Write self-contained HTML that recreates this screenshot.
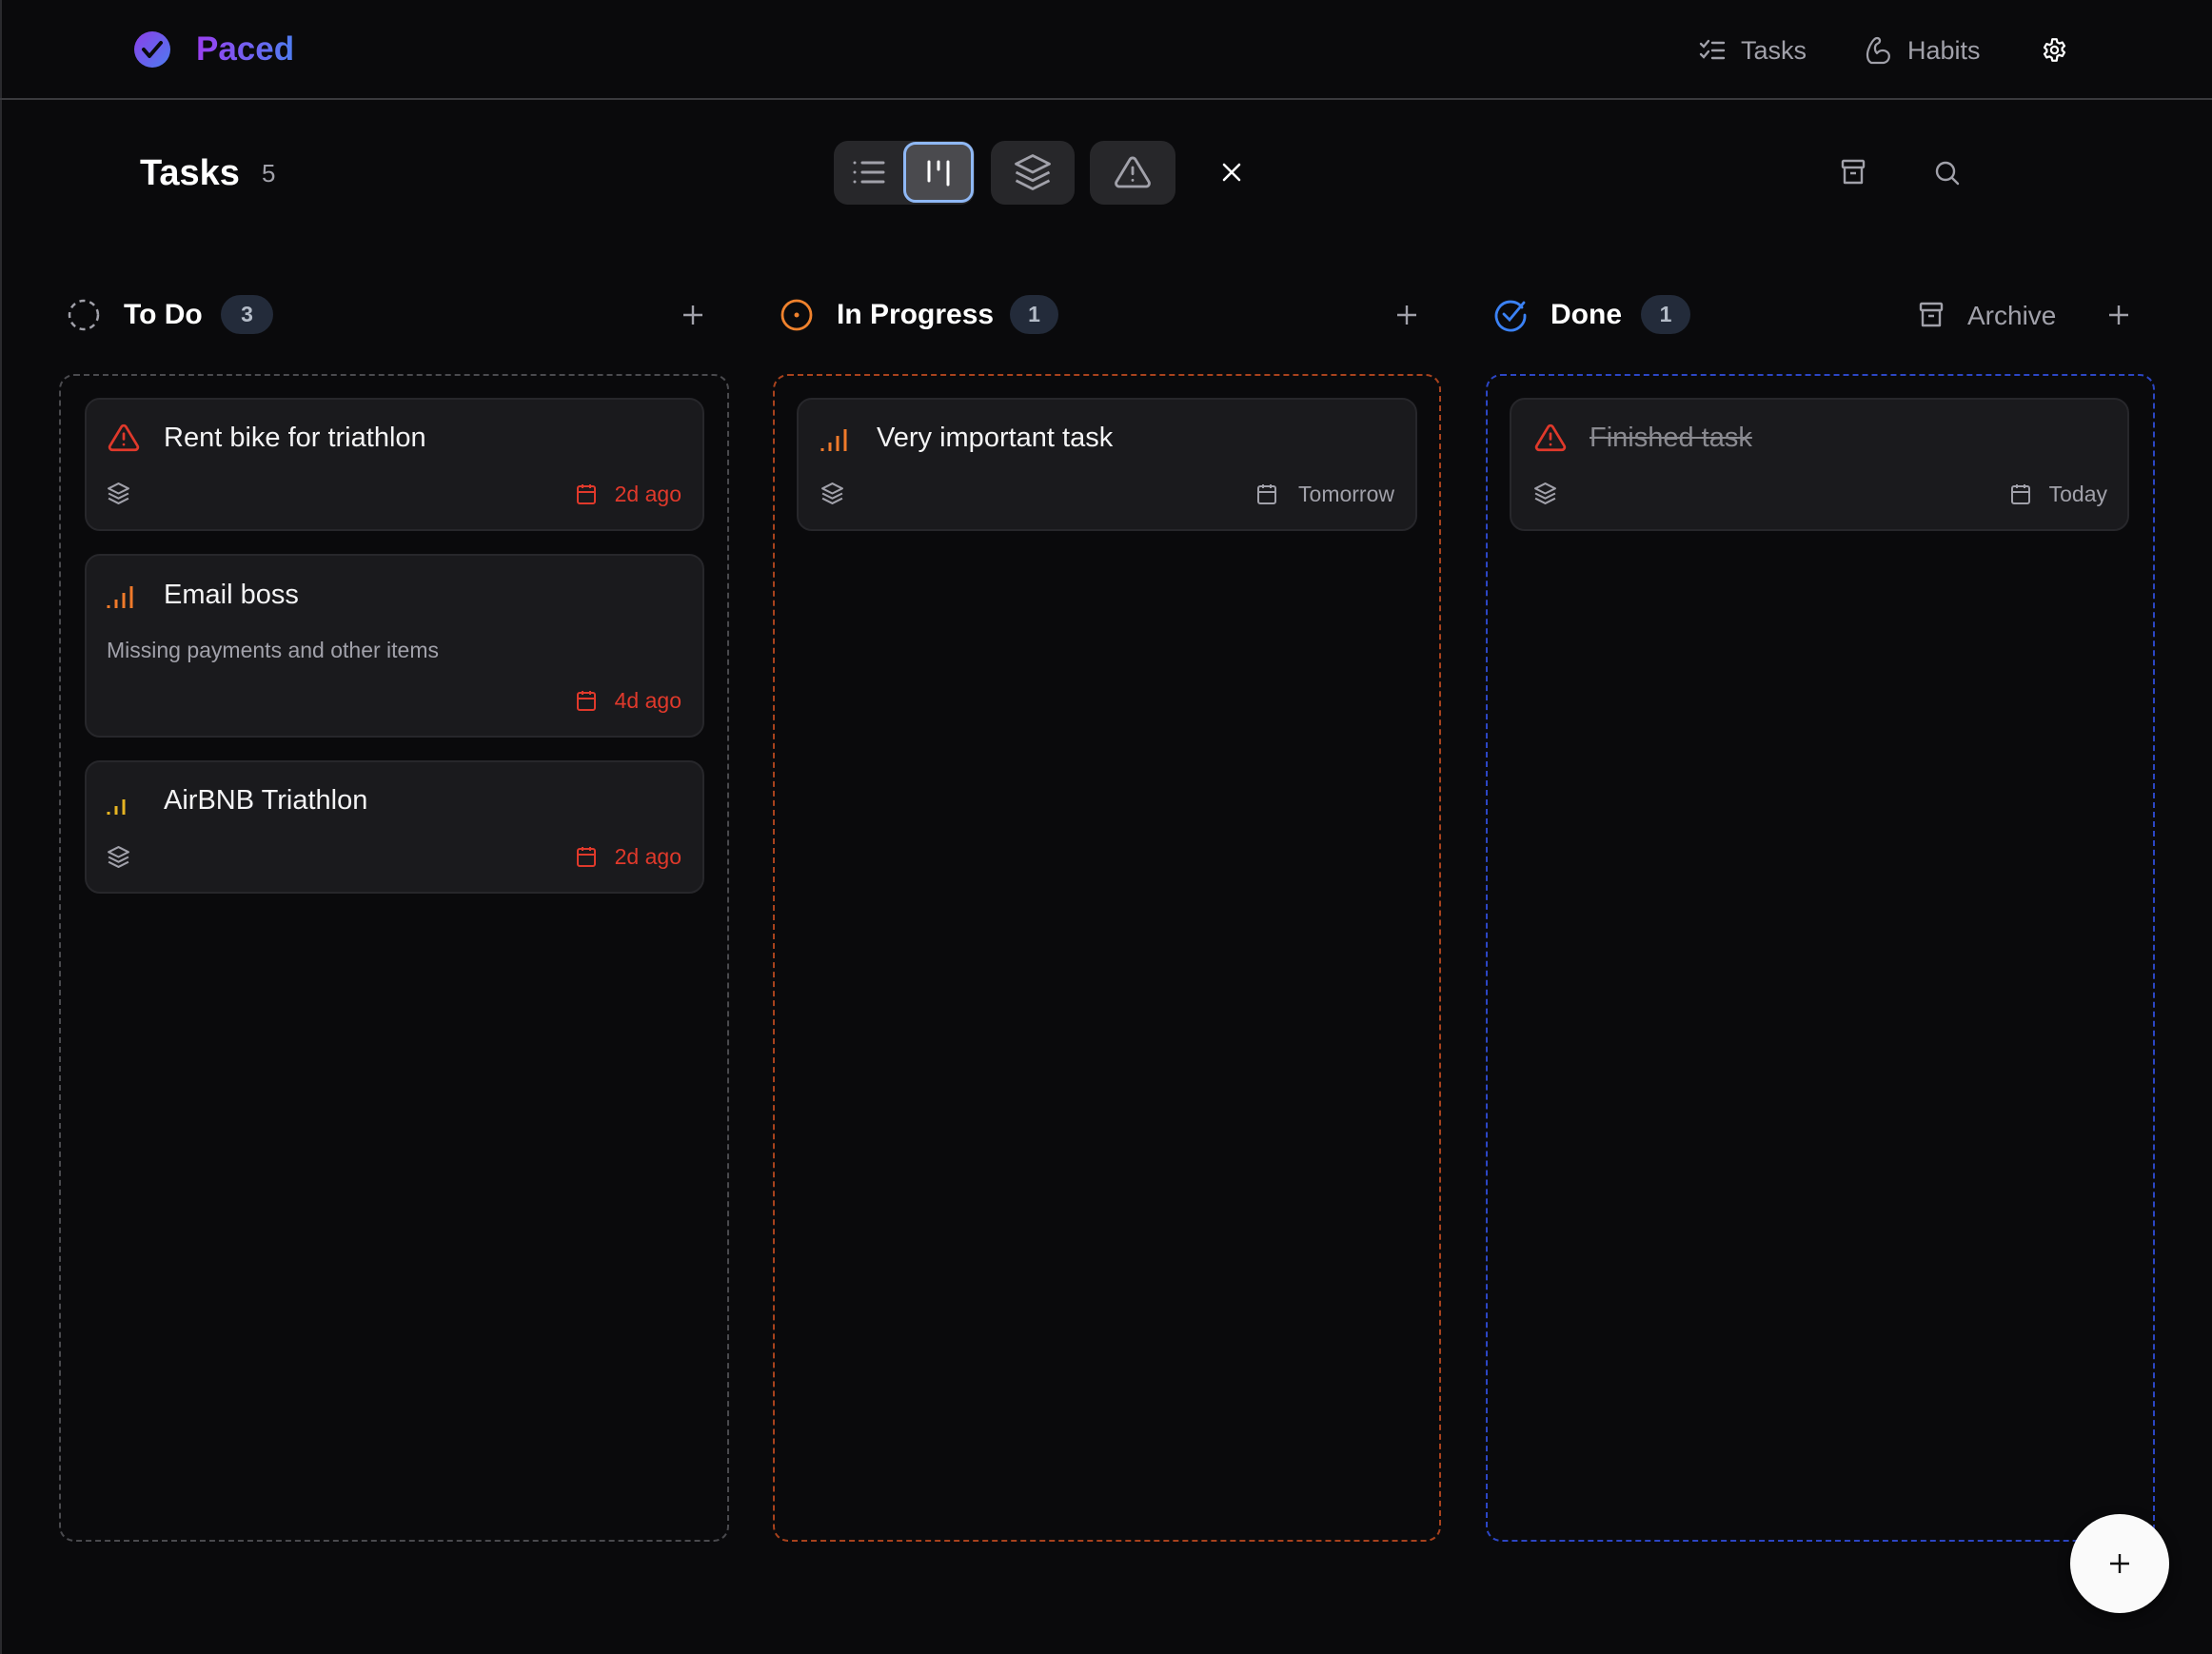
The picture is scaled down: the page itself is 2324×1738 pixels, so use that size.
<!DOCTYPE html>
<html><head><meta charset="utf-8"><style>
*{box-sizing:border-box;margin:0;padding:0}
body{width:2324px;height:1738px;background:#0a0a0c;font-family:"Liberation Sans",sans-serif;position:relative;overflow:hidden;color:#fff}
.a{position:absolute}
.t{position:absolute;white-space:nowrap;line-height:1}
svg{position:absolute;overflow:visible}
.col{position:absolute;top:393px;height:1227px;border:2px dashed;border-radius:16px}
.card{position:absolute;background:#1a1a1d;border:2px solid #27272b;border-radius:16px}
.badge{position:absolute;top:310px;height:41px;background:#232b3a;border-radius:21px;color:#b4bcc8;font-size:23px;font-weight:bold;text-align:center;line-height:41px}
.ct{font-size:29px;color:#f4f4f5}
.dt{font-size:23px}
</style></head><body>
<div class="a" style="left:0;top:0;width:2px;height:1738px;background:#2a2a2e"></div>
<div class="a" style="left:0;top:103px;width:2324px;height:2px;background:#3a3a3e"></div>

<!-- logo -->
<svg style="left:141px;top:33px" width="38" height="38" viewBox="0 0 38 38"><defs><linearGradient id="g" x1="0" y1="0" x2="1" y2="1"><stop offset="0" stop-color="#8b3fe8"/><stop offset="1" stop-color="#4c7cf0"/></linearGradient></defs><circle cx="19" cy="19" r="19" fill="url(#g)"/><path d="M10 19l6 7 12-14" stroke="#0a0a0c" stroke-width="4" fill="none" stroke-linecap="round" stroke-linejoin="round"/></svg>
<div class="t" style="left:206px;top:34px;font-size:35px;font-weight:bold;background:linear-gradient(90deg,#9a3ff0,#4f7ef2);-webkit-background-clip:text;background-clip:text;color:transparent">Paced</div>

<!-- nav -->
<svg style="left:1786px;top:42px" width="26" height="22" viewBox="0 0 26 22" fill="none" stroke="#a1a1aa" stroke-width="2.4" stroke-linecap="round"><path d="M1 4l3 3 5-6M1 15l3 3 5-6M13 3h12M13 11h12M13 19h12"/></svg>
<div class="t" style="left:1829px;top:40px;font-size:27px;color:#a1a1aa">Tasks</div>
<svg style="left:1960px;top:38px" width="28" height="30" viewBox="0 0 28 30" fill="none" stroke="#a1a1aa" stroke-width="2.2" stroke-linecap="round" stroke-linejoin="round"><path d="M6 28C2 26 1 20 3 14 5 8 9 2 12 2c3 0 4 3 2 5l-3 2c-2 3-1 7 1 9 3-4 9-4 12 0 2 4 0 9-5 10z"/></svg>
<div class="t" style="left:2004px;top:40px;font-size:27px;color:#a1a1aa">Habits</div>
<svg style="left:2145px;top:39px" width="27" height="27" viewBox="0 0 24 24" fill="none" stroke="#fff" stroke-width="2" stroke-linejoin="round"><path d="M10 2h4l.6 2.8 2 1.1 2.7-1 2 3.4-2.1 1.9v2.2l2.1 1.9-2 3.4-2.7-1-2 1.1L14 22h-4l-.6-2.8-2-1.1-2.7 1-2-3.4 2.1-1.9v-2.2L2.7 9.7l2-3.4 2.7 1 2-1.1z"/><circle cx="12" cy="12" r="3.2"/></svg>

<!-- page header -->
<div class="t" style="left:147px;top:163px;font-size:38px;font-weight:bold">Tasks</div>
<div class="t" style="left:275px;top:169px;font-size:26px;color:#a1a1aa">5</div>

<div class="a" style="left:876px;top:148px;width:148px;height:67px;background:#27272a;border-radius:15px"></div>
<svg style="left:896px;top:168px" width="34" height="26" viewBox="0 0 34 26" stroke="#a1a1aa" stroke-width="3" stroke-linecap="round"><path d="M2 3h0M2 13h0M2 23h0M10 3h22M10 13h22M10 23h22"/></svg>
<div class="a" style="left:949px;top:149px;width:74px;height:64px;background:#4a4a4e;border:3px solid #8fb8f5;border-radius:13px"></div>
<svg style="left:973px;top:168px" width="26" height="28" viewBox="0 0 26 28" stroke="#fff" stroke-width="3" stroke-linecap="round"><path d="M3 2v20M13 2v8M23 2v24"/></svg>
<div class="a" style="left:1041px;top:148px;width:88px;height:67px;background:#27272a;border-radius:15px"></div>
<svg style="left:1064px;top:160px" width="42" height="42" viewBox="0 0 24 24" fill="none" stroke="#a1a1aa" stroke-width="1.6" stroke-linejoin="round"><path d="M12 2L2 7l10 5 10-5zM2 12l10 5 10-5M2 17l10 5 10-5"/></svg>
<div class="a" style="left:1145px;top:148px;width:90px;height:67px;background:#27272a;border-radius:15px"></div>
<svg style="left:1169px;top:161px" width="42" height="40" viewBox="0 0 24 24" fill="none" stroke="#a1a1aa" stroke-width="1.7" stroke-linecap="round" stroke-linejoin="round"><path d="M10.3 3.9L1.8 18a2 2 0 001.7 3h17a2 2 0 001.7-3L13.7 3.9a2 2 0 00-3.4 0zM12 9v4M12 17h0"/></svg>
<svg style="left:1284px;top:171px" width="20" height="20" viewBox="0 0 20 20" stroke="#fff" stroke-width="2.6" stroke-linecap="round"><path d="M2 2l16 16M18 2L2 18"/></svg>
<svg style="left:1934px;top:167px" width="26" height="28" viewBox="0 0 26 28" fill="none" stroke="#a1a1aa" stroke-width="2.4" stroke-linejoin="round"><rect x="2" y="2" width="22" height="7" rx="1"/><path d="M4 9v16h18V9M10 15h6"/></svg>
<svg style="left:2032px;top:168px" width="28" height="28" viewBox="0 0 28 28" fill="none" stroke="#a1a1aa" stroke-width="2.4" stroke-linecap="round"><circle cx="12" cy="12" r="9"/><path d="M19 19l6 6"/></svg>

<!-- columns headers -->
<svg style="left:71px;top:314px" width="34" height="34" viewBox="0 0 34 34"><circle cx="17" cy="17" r="15" fill="none" stroke="#a1a1aa" stroke-width="2.5" stroke-dasharray="6 5"/></svg>
<div class="t" style="left:130px;top:316px;font-size:30px;font-weight:bold">To Do</div>
<div class="badge" style="left:232px;width:55px">3</div>
<svg style="left:717px;top:320px" width="22" height="22" viewBox="0 0 22 22" stroke="#a1a1aa" stroke-width="2.4"><path d="M11 1v20M1 11h20"/></svg>

<svg style="left:820px;top:314px" width="34" height="34" viewBox="0 0 34 34"><circle cx="17" cy="17" r="15" fill="none" stroke="#f0822d" stroke-width="2.8"/><circle cx="17" cy="17" r="2.5" fill="#f0822d"/></svg>
<div class="t" style="left:879px;top:316px;font-size:30px;font-weight:bold">In Progress</div>
<div class="badge" style="left:1061px;width:51px">1</div>
<svg style="left:1467px;top:320px" width="22" height="22" viewBox="0 0 22 22" stroke="#a1a1aa" stroke-width="2.4"><path d="M11 1v20M1 11h20"/></svg>

<svg style="left:1569px;top:313px" width="36" height="36" viewBox="0 0 36 36" fill="none" stroke="#3b82f6" stroke-width="2.8" stroke-linecap="round"><path d="M30 10A15 15 0 1 0 33 18"/><path d="M11 17l6 6L32 5"/></svg>
<div class="t" style="left:1629px;top:316px;font-size:30px;font-weight:bold">Done</div>
<div class="badge" style="left:1724px;width:52px">1</div>
<svg style="left:2016px;top:317px" width="26" height="28" viewBox="0 0 26 28" fill="none" stroke="#a1a1aa" stroke-width="2.4" stroke-linejoin="round"><rect x="2" y="2" width="22" height="7" rx="1"/><path d="M4 9v16h18V9M10 15h6"/></svg>
<div class="t" style="left:2067px;top:318px;font-size:28px;color:#a1a1aa">Archive</div>
<svg style="left:2215px;top:320px" width="22" height="22" viewBox="0 0 22 22" stroke="#a1a1aa" stroke-width="2.4"><path d="M11 1v20M1 11h20"/></svg>

<!-- columns -->
<div class="col" style="left:62px;width:704px;border-color:#4a4a4e"></div>
<div class="col" style="left:812px;width:702px;border-color:#a8421d"></div>
<div class="col" style="left:1561px;width:703px;border-color:#2c46c4"></div>

<!-- col1 cards -->
<div class="card" style="left:89px;top:418px;width:651px;height:140px"></div>
<svg style="left:112px;top:443px" width="36" height="34" viewBox="0 0 24 24" fill="none" stroke="#e0392b" stroke-width="1.9" stroke-linecap="round" stroke-linejoin="round"><path d="M10.3 3.9L1.8 18a2 2 0 001.7 3h17a2 2 0 001.7-3L13.7 3.9a2 2 0 00-3.4 0zM12 9v4M12 17h0"/></svg>
<div class="t ct" style="left:172px;top:446px">Rent bike for triathlon</div>
<svg style="left:112px;top:506px" width="25" height="25" viewBox="0 0 24 24" fill="none" stroke="#a1a1aa" stroke-width="2" stroke-linejoin="round"><path d="M12 2L2 7l10 5 10-5zM2 12l10 5 10-5M2 17l10 5 10-5"/></svg>
<svg style="left:606px;top:508px" width="20" height="22" viewBox="0 0 20 22" fill="none" stroke="#e0392b" stroke-width="2"><rect x="1" y="3" width="18" height="18" rx="2"/><path d="M1 9h18M6 1v4M14 1v4"/></svg>
<div class="t dt" style="right:1608px;top:508px;color:#e0392b">2d ago</div>

<div class="card" style="left:89px;top:582px;width:651px;height:193px"></div>
<svg style="left:112px;top:614px" width="30" height="26" viewBox="0 0 30 26" stroke="#f07a2a" stroke-width="3"><path d="M2 22v3M10 16v9M18 9v16M26 2v23"/></svg>
<div class="t ct" style="left:172px;top:611px">Email boss</div>
<div class="t" style="left:112px;top:672px;font-size:23px;color:#a1a1aa">Missing payments and other items</div>
<svg style="left:606px;top:725px" width="20" height="22" viewBox="0 0 20 22" fill="none" stroke="#e0392b" stroke-width="2"><rect x="1" y="3" width="18" height="18" rx="2"/><path d="M1 9h18M6 1v4M14 1v4"/></svg>
<div class="t dt" style="right:1608px;top:725px;color:#e0392b">4d ago</div>

<div class="card" style="left:89px;top:799px;width:651px;height:140px"></div>
<svg style="left:112px;top:837px" width="24" height="20" viewBox="0 0 24 20" stroke="#e6b422" stroke-width="3"><path d="M2 16v3M10 10v9M18 3v16"/></svg>
<div class="t ct" style="left:172px;top:827px">AirBNB Triathlon</div>
<svg style="left:112px;top:888px" width="25" height="25" viewBox="0 0 24 24" fill="none" stroke="#a1a1aa" stroke-width="2" stroke-linejoin="round"><path d="M12 2L2 7l10 5 10-5zM2 12l10 5 10-5M2 17l10 5 10-5"/></svg>
<svg style="left:606px;top:889px" width="20" height="22" viewBox="0 0 20 22" fill="none" stroke="#e0392b" stroke-width="2"><rect x="1" y="3" width="18" height="18" rx="2"/><path d="M1 9h18M6 1v4M14 1v4"/></svg>
<div class="t dt" style="right:1608px;top:889px;color:#e0392b">2d ago</div>

<!-- col2 card -->
<div class="card" style="left:837px;top:418px;width:652px;height:140px"></div>
<svg style="left:862px;top:449px" width="30" height="26" viewBox="0 0 30 26" stroke="#f07a2a" stroke-width="3"><path d="M2 22v3M10 16v9M18 9v16M26 2v23"/></svg>
<div class="t ct" style="left:921px;top:446px">Very important task</div>
<svg style="left:862px;top:506px" width="25" height="25" viewBox="0 0 24 24" fill="none" stroke="#a1a1aa" stroke-width="2" stroke-linejoin="round"><path d="M12 2L2 7l10 5 10-5zM2 12l10 5 10-5M2 17l10 5 10-5"/></svg>
<svg style="left:1321px;top:508px" width="20" height="22" viewBox="0 0 20 22" fill="none" stroke="#a1a1aa" stroke-width="2"><rect x="1" y="3" width="18" height="18" rx="2"/><path d="M1 9h18M6 1v4M14 1v4"/></svg>
<div class="t dt" style="right:859px;top:508px;color:#a1a1aa">Tomorrow</div>

<!-- col3 card -->
<div class="card" style="left:1586px;top:418px;width:651px;height:140px"></div>
<svg style="left:1611px;top:443px" width="36" height="34" viewBox="0 0 24 24" fill="none" stroke="#e0392b" stroke-width="1.9" stroke-linecap="round" stroke-linejoin="round"><path d="M10.3 3.9L1.8 18a2 2 0 001.7 3h17a2 2 0 001.7-3L13.7 3.9a2 2 0 00-3.4 0zM12 9v4M12 17h0"/></svg>
<div class="t ct" style="left:1670px;top:446px;color:#8a8a90;text-decoration:line-through">Finished task</div>
<svg style="left:1611px;top:506px" width="25" height="25" viewBox="0 0 24 24" fill="none" stroke="#a1a1aa" stroke-width="2" stroke-linejoin="round"><path d="M12 2L2 7l10 5 10-5zM2 12l10 5 10-5M2 17l10 5 10-5"/></svg>
<svg style="left:2113px;top:508px" width="20" height="22" viewBox="0 0 20 22" fill="none" stroke="#a1a1aa" stroke-width="2"><rect x="1" y="3" width="18" height="18" rx="2"/><path d="M1 9h18M6 1v4M14 1v4"/></svg>
<div class="t dt" style="right:110px;top:508px;color:#a1a1aa">Today</div>

<!-- FAB -->
<div class="a" style="left:2175px;top:1591px;width:104px;height:104px;border-radius:50%;background:#fafafa;box-shadow:0 4px 12px rgba(0,0,0,.5)"></div>
<svg style="left:2217px;top:1633px" width="20" height="20" viewBox="0 0 20 20" stroke="#111" stroke-width="2.4"><path d="M10 0v20M0 10h20"/></svg>
</body></html>
